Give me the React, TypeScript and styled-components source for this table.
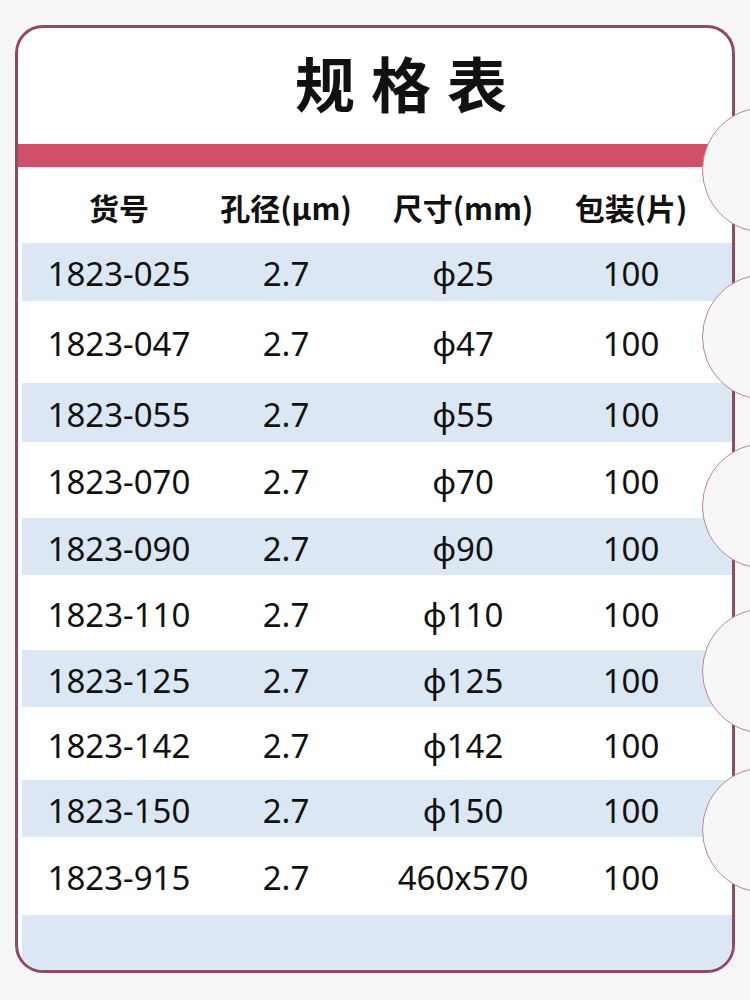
import React from "react";
import styled, { createGlobalStyle } from "styled-components";

const GlobalStyle = createGlobalStyle`
  html, body {
    margin: 0;
    padding: 0;
    background: #f6f6f6;
  }
  * { box-sizing: border-box; }
`;

const Page = styled.div`
  position: relative;
  width: 750px;
  height: 1000px;
  overflow: hidden;
  padding: 25px 15px 0 15px;
  background: #f6f6f6;
  font-family: "Noto Sans", "Noto Sans CJK SC", sans-serif;
  color: #111;
`;

const Card = styled.div`
  height: 948px;
  border: 3px solid #8f4b60;
  border-radius: 28px;
  background: #ffffff;
  overflow: hidden;
  display: flex;
  flex-direction: column;
`;

const TitleBar = styled.div`
  height: 116px;
  display: flex;
  align-items: center;
  justify-content: center;
  padding-left: 68px;
  padding-bottom: 8px;
`;

const Title = styled.h1`
  margin: 0;
  font-family: "Noto Sans CJK SC", sans-serif;
  font-weight: 700;
  font-size: 60px;
  letter-spacing: 16px;
  line-height: 1;
`;

const Band = styled.div`
  height: 23px;
  background: #cf5068;
`;

const Grid = styled.div<{ $h: number; $blue?: boolean }>`
  display: grid;
  grid-template-columns: 202px 132px 222px 114px 1fr;
  align-items: center;
  height: ${(p) => p.$h}px;
  background: ${(p) =>
    p.$blue
      ? "linear-gradient(#dbe8f4, #dbe8f4) 4px 0 / 100% 100% no-repeat"
      : "transparent"};
`;

const HeadCell = styled.div`
  text-align: center;
  font-family: "Noto Sans CJK SC", sans-serif;
  font-weight: 700;
  font-size: 30px;
  line-height: 1;
  padding-top: 4px;
  white-space: nowrap;
`;

const Cell = styled.div`
  text-align: center;
  font-family: "Noto Sans", sans-serif;
  font-size: 33px;
  line-height: 1;
  padding-top: 3px;
  white-space: nowrap;
`;

const Footer = styled.div`
  flex: 1;
  margin-left: 4px;
  background: #dbe8f4;
`;

const Notch = styled.div<{ $cy: number }>`
  position: absolute;
  left: 702px;
  top: ${(p) => p.$cy - 63}px;
  width: 126px;
  height: 126px;
  border-radius: 50%;
  background: #f8f7f8;
  border: 1.5px solid #b98896;
`;

const rows: { code: string; size: string; h: number }[] = [
  { code: "1823-025", size: "ϕ25", h: 58 },
  { code: "1823-047", size: "ϕ47", h: 82 },
  { code: "1823-055", size: "ϕ55", h: 59 },
  { code: "1823-070", size: "ϕ70", h: 76 },
  { code: "1823-090", size: "ϕ90", h: 57 },
  { code: "1823-110", size: "ϕ110", h: 75 },
  { code: "1823-125", size: "ϕ125", h: 57 },
  { code: "1823-142", size: "ϕ142", h: 73 },
  { code: "1823-150", size: "ϕ150", h: 57 },
  { code: "1823-915", size: "460x570", h: 78 },
];

const notches = [170, 337, 506, 671, 830];

export default function App() {
  return (
    <>
      <GlobalStyle />
      <Page>
        <Card>
          <TitleBar>
            <Title>规格表</Title>
          </TitleBar>
          <Band />
          <Grid $h={76}>
            <HeadCell>货号</HeadCell>
            <HeadCell>孔径(μm)</HeadCell>
            <HeadCell>尺寸(mm)</HeadCell>
            <HeadCell>包装(片)</HeadCell>
          </Grid>
          {rows.map((r, i) => (
            <Grid key={r.code} $h={r.h} $blue={i % 2 === 0}>
              <Cell>{r.code}</Cell>
              <Cell>2.7</Cell>
              <Cell>{r.size}</Cell>
              <Cell>100</Cell>
            </Grid>
          ))}
          <Footer />
        </Card>
        {notches.map((cy) => (
          <Notch key={cy} $cy={cy} />
        ))}
      </Page>
    </>
  );
}
